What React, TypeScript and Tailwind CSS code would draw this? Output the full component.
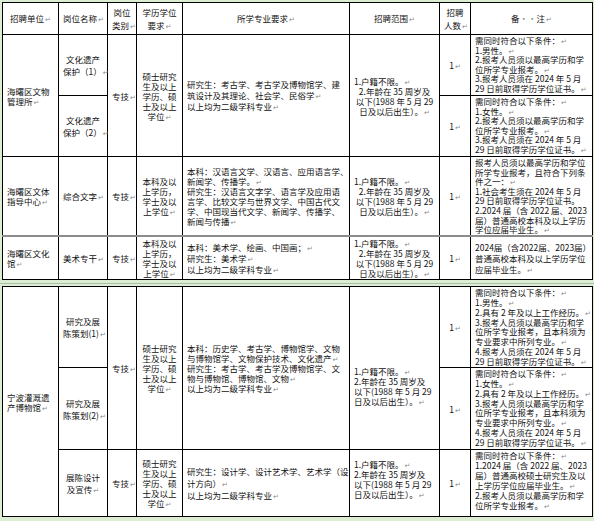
import React from "react";

// Word-style paragraph mark
function Mark() {
  return (
    <span className="ml-[1px] text-[7px] leading-[0] text-[#8a8a8a] font-['DejaVu_Sans',sans-serif]">
      ↵
    </span>
  );
}

function Lines({ lines, align = "left" }: { lines: string[]; align?: "left" | "center" }) {
  return (
    <div className={align === "center" ? "text-center" : "text-left"}>
      {lines.map((l, i) => {
        const m = l.endsWith("↵");
        const t = m ? l.slice(0, -1) : l;
        return (
          <div key={i} className="whitespace-nowrap">
            {t}
            {m && <Mark />}
          </div>
        );
      })}
    </div>
  );
}

const td = "border border-black align-middle px-[4px] py-0 leading-[10px]";
const tdTop = "border border-black align-top px-[4px] pt-[1px] pb-0";

const range = ["2.年龄在 35 周岁及", "以下(1988 年 5 月 29", "日及以后出生）。↵"];

function Range({ centered }: { centered: boolean }) {
  return (
    <div>
      <Lines lines={["1.户籍不限。↵"]} />
      <Lines lines={range} align={centered ? "center" : "left"} />
    </div>
  );
}

const degreeMaster = ["硕士研究", "生及以上", "学历、硕", "士及以上", "学位↵"];
const degreeBachelor = ["本科及以", "上学历，", "学士及以", "上学位↵"];

function Cols() {
  return (
    <colgroup>
      <col className="w-[56px]" />
      <col className="w-[49px]" />
      <col className="w-[29px]" />
      <col className="w-[46px]" />
      <col className="w-[167px]" />
      <col className="w-[90px]" />
      <col className="w-[31px]" />
      <col className="w-[122px]" />
    </colgroup>
  );
}

export default function App() {
  return (
    <div className="w-[594px] h-[521px] overflow-hidden bg-[#dcedd4] pt-[2px] pl-[2px] text-[8.5px] text-[#111] font-['Noto_Sans_CJK_SC',sans-serif]">
      <table className="table-fixed border-collapse w-[590px] bg-white">
        <Cols />
        <tbody>
          <tr className="h-[32px]">
            <td className={td + " leading-[13px]"}><Lines lines={["招聘单位↵"]} align="center" /></td>
            <td className={td + " leading-[13px]"}><Lines lines={["岗位名称↵"]} align="center" /></td>
            <td className={td + " leading-[13px] px-[2px]"}><Lines lines={["岗位", "类别↵"]} align="center" /></td>
            <td className={td + " leading-[13px]"}><Lines lines={["学历学位", "要求↵"]} align="center" /></td>
            <td className={td + " leading-[13px]"}><Lines lines={["所学专业要求↵"]} align="center" /></td>
            <td className={td + " leading-[13px]"}><Lines lines={["招聘范围↵"]} align="center" /></td>
            <td className={td + " leading-[13px] px-[2px]"}><Lines lines={["招聘", "人数↵"]} align="center" /></td>
            <td className={td + " leading-[13px] text-center"}>
              备<span className="text-[#8a8a8a]">··</span>注<Mark />
            </td>
          </tr>

          {/* 海曙区文物管理所 */}
          <tr className="h-[61px]">
            <td rowSpan={2} className={td}><Lines lines={["海曙区文物", "管理所↵"]} /></td>
            <td className={td + " leading-[12px]"}><Lines lines={["文化遗产", "保护（1）↵"]} align="center" /></td>
            <td rowSpan={2} className={td + " px-[2px]"}><Lines lines={["专技↵"]} align="center" /></td>
            <td rowSpan={2} className={td}><Lines lines={degreeMaster} align="center" /></td>
            <td rowSpan={2} className={td + " leading-[11px]"}>
              <Lines lines={["研究生：考古学、考古学及博物馆学、建", "筑设计及其理论、社会学、民俗学↵", "以上均为二级学科专业↵"]} />
            </td>
            <td rowSpan={2} className={td}><Range centered /></td>
            <td className={td + " px-[2px]"}><Lines lines={["1↵"]} align="center" /></td>
            <td className={tdTop + " leading-[9.6px]"}>
              <Lines lines={["需同时符合以下条件：↵", "1.男性。↵", "2.报考人员须以最高学历和学", "位所学专业报考。↵", "3.报考人员须在 2024 年 5 月", "29 日前取得学历学位证书。↵"]} />
            </td>
          </tr>
          <tr className="h-[61px]">
            <td className={td + " leading-[12px]"}><Lines lines={["文化遗产", "保护（2）↵"]} align="center" /></td>
            <td className={td + " px-[2px]"}><Lines lines={["1↵"]} align="center" /></td>
            <td className={tdTop + " leading-[9.6px]"}>
              <Lines lines={["需同时符合以下条件：↵", "1.女性。↵", "2.报考人员须以最高学历和学", "位所学专业报考。↵", "3.报考人员须在 2024 年 5 月", "29 日前取得学历学位证书。↵"]} />
            </td>
          </tr>

          {/* 海曙区文体指导中心 */}
          <tr className="h-[79px]">
            <td className={td}><Lines lines={["海曙区文体", "指导中心↵"]} /></td>
            <td className={td}><Lines lines={["综合文字↵"]} align="center" /></td>
            <td className={td + " px-[2px]"}><Lines lines={["专技↵"]} align="center" /></td>
            <td className={td}><Lines lines={degreeBachelor} align="center" /></td>
            <td className={td}>
              <Lines
                lines={[
                  "本科：汉语言文学、汉语言、应用语言学、",
                  "新闻学、传播学。↵",
                  "研究生：汉语言文字学、语言学及应用语",
                  "言学、比较文学与世界文学、中国古代文",
                  "学、中国现当代文学、新闻学、传播学、",
                  "新闻与传播↵",
                ]}
              />
            </td>
            <td className={td}><Range centered /></td>
            <td className={td + " px-[2px]"}><Lines lines={["1↵"]} align="center" /></td>
            <td className={tdTop + " leading-[9.6px]"}>
              <Lines
                lines={[
                  "报考人员须以最高学历和学位",
                  "所学专业报考，且符合下列条",
                  "件之一：↵",
                  "1.社会考生须在 2024 年 5 月",
                  "29 日前取得学历学位证书。",
                  "2.2024 届（含 2022 届、2023",
                  "届）普通高校本科及以上学历",
                  "学位应届毕业生。↵",
                ]}
              />
            </td>
          </tr>

          {/* 海曙区文化馆 */}
          <tr className="h-[44px] [&>td]:border-t-2 [&>td]:border-t-[#8c8c8c]">
            <td className={td}><Lines lines={["海曙区文化", "馆↵"]} /></td>
            <td className={td}><Lines lines={["美术专干↵"]} align="center" /></td>
            <td className={td + " px-[2px]"}><Lines lines={["专技↵"]} align="center" /></td>
            <td className={td}><Lines lines={degreeBachelor} align="center" /></td>
            <td className={td + " leading-[11px]"}>
              <Lines lines={["本科：美术学、绘画、中国画；↵", "研究生：美术学↵", "以上均为二级学科专业↵"]} />
            </td>
            <td className={td}><Range centered /></td>
            <td className={td + " px-[2px]"}><Lines lines={["1↵"]} align="center" /></td>
            <td className={td + " leading-[11px]"}>
              <Lines lines={["2024届（含2022届、2023届）", "普通高校本科及以上学历学位", "应届毕业生。↵"]} />
            </td>
          </tr>
        </tbody>
      </table>

      <div className="h-[6px] -ml-[2px] flex items-center">
        <div className="h-px w-full bg-[#aebfa8]" />
      </div>

      <table className="table-fixed border-collapse w-[590px] bg-white">
        <Cols />
        <tbody>
          {/* 宁波灌溉遗产博物馆 */}
          <tr className="h-[81px]">
            <td rowSpan={3} className={td}><Lines lines={["宁波灌溉遗", "产博物馆↵"]} /></td>
            <td className={td + " leading-[12px]"}><Lines lines={["研究及展", "陈策划(1)↵"]} align="center" /></td>
            <td rowSpan={2} className={td + " px-[2px]"}><Lines lines={["专技↵"]} align="center" /></td>
            <td rowSpan={2} className={td}><Lines lines={degreeMaster} align="center" /></td>
            <td rowSpan={2} className={td}>
              <Lines
                lines={[
                  "本科：历史学、考古学、博物馆学、文物",
                  "与博物馆学、文物保护技术、文化遗产↵",
                  "研究生：考古学、考古学及博物馆学、文",
                  "物与博物馆、博物馆、文物↵",
                  "以上均为二级学科专业↵",
                ]}
              />
            </td>
            <td rowSpan={2} className={td + " leading-[10px] pt-[36px]"}><Range centered={false} /></td>
            <td className={td + " px-[2px]"}><Lines lines={["1↵"]} align="center" /></td>
            <td className={tdTop + " leading-[9.8px] pt-0"}>
              <Lines
                lines={[
                  "需同时符合以下条件：↵",
                  "1.男性。↵",
                  "2.具有 2 年及以上工作经历。↵",
                  "3.报考人员须以最高学历和学",
                  "位所学专业报考，且本科须为",
                  "专业要求中所列专业。↵",
                  "4.报考人员须在 2024 年 5 月",
                  "29 日前取得学历学位证书。↵",
                ]}
              />
            </td>
          </tr>
          <tr className="h-[82px]">
            <td className={td + " leading-[12px]"}><Lines lines={["研究及展", "陈策划(2)↵"]} align="center" /></td>
            <td className={td + " px-[2px]"}><Lines lines={["1↵"]} align="center" /></td>
            <td className={tdTop + " leading-[9.8px] pt-0"}>
              <Lines
                lines={[
                  "需同时符合以下条件：↵",
                  "1.女性。↵",
                  "2.具有 2 年及以上工作经历。↵",
                  "3.报考人员须以最高学历和学",
                  "位所学专业报考，且本科须为",
                  "专业要求中所列专业。↵",
                  "4.报考人员须在 2024 年 5 月",
                  "29 日前取得学历学位证书。↵",
                ]}
              />
            </td>
          </tr>
          <tr className="h-[66px]">
            <td className={td + " leading-[12px]"}><Lines lines={["展陈设计", "及宣传↵"]} align="center" /></td>
            <td className={td + " px-[2px]"}><Lines lines={["专技↵"]} align="center" /></td>
            <td className={td}><Lines lines={degreeMaster} align="center" /></td>
            <td className={td + " leading-[12px]"}>
              <Lines lines={["研究生：设计学、设计艺术学、艺术学（设", "计方向）↵", "以上均为二级学科专业↵"]} />
            </td>
            <td className={td + " pb-[8px]"}><Range centered={false} /></td>
            <td className={td + " px-[2px]"}><Lines lines={["1↵"]} align="center" /></td>
            <td className={td + " leading-[9.2px] pb-[6px]"}>
              <Lines
                lines={[
                  "需同时符合以下条件：↵",
                  "1.2024 届（含 2022 届、2023",
                  "届）普通高校硕士研究生及以",
                  "上学历学位应届毕业生。↵",
                  "2.报考人员须以最高学历和学",
                  "位所学专业报考。↵",
                ]}
              />
            </td>
          </tr>
        </tbody>
      </table>
    </div>
  );
}
